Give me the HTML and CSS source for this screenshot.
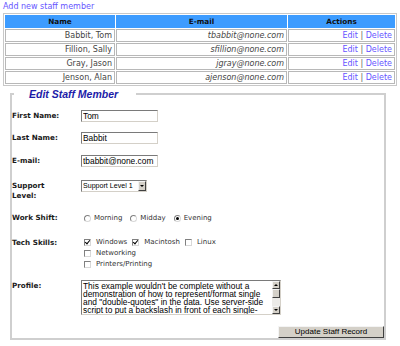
FILE: index.html
```html
<!DOCTYPE html>
<html>
<head>
<meta charset="utf-8">
<link rel="stylesheet" href="styles.css">
</head>
<body>
<a class="add-link" href="#">Add new staff member</a>
<table class="staff">
  <colgroup><col class="col-name"><col class="col-email"><col class="col-act"></colgroup>
  <thead>
    <tr><th>Name</th><th>E-mail</th><th>Actions</th></tr>
  </thead>
  <tbody>
    <tr><td>Babbit, Tom</td><td class="email">tbabbit@none.com</td><td><a href="#">Edit</a> <span class="sep">|</span> <a href="#">Delete</a></td></tr>
    <tr><td>Fillion, Sally</td><td class="email">sfillion@none.com</td><td><a href="#">Edit</a> <span class="sep">|</span> <a href="#">Delete</a></td></tr>
    <tr><td>Gray, Jason</td><td class="email">jgray@none.com</td><td><a href="#">Edit</a> <span class="sep">|</span> <a href="#">Delete</a></td></tr>
    <tr><td>Jenson, Alan</td><td class="email">ajenson@none.com</td><td><a href="#">Edit</a> <span class="sep">|</span> <a href="#">Delete</a></td></tr>
  </tbody>
</table>

<fieldset class="edit">
  <legend>Edit Staff Member</legend>
  <div class="form">
    <div class="row r1">
      <label class="lbl">First Name:</label>
      <div class="ctl"><input class="txt" type="text" value="Tom"></div>
    </div>
    <div class="row r2">
      <label class="lbl">Last Name:</label>
      <div class="ctl"><input class="txt" type="text" value="Babbit"></div>
    </div>
    <div class="row r3">
      <label class="lbl">E-mail:</label>
      <div class="ctl"><input class="txt" type="text" value="tbabbit@none.com"></div>
    </div>
    <div class="row r4">
      <label class="lbl lbl-two">Support Level:</label>
      <div class="ctl">
        <span class="sel-wrap"><select class="sel"><option>Support Level 1</option></select><span class="sel-btn"><span class="tri"></span></span></span>
      </div>
    </div>
    <div class="row r5">
      <label class="lbl lbl-10">Work Shift:</label>
      <div class="ctl opts">
        <label class="opt"><input type="radio" name="shift" class="rad"><span>Morning</span></label>
        <label class="opt"><input type="radio" name="shift" class="rad"><span>Midday</span></label>
        <label class="opt"><input type="radio" name="shift" class="rad" checked><span>Evening</span></label>
      </div>
    </div>
    <div class="row r6">
      <label class="lbl lbl-11">Tech Skills:</label>
      <div class="ctl skills">
        <div class="skill-line">
          <label class="opt cb-opt"><input type="checkbox" class="chk" checked><span>Windows</span></label>
          <label class="opt cb-opt"><input type="checkbox" class="chk" checked><span>Macintosh</span></label>
          <label class="opt cb-opt"><input type="checkbox" class="chk"><span>Linux</span></label>
        </div>
        <div class="skill-line">
          <label class="opt cb-opt"><input type="checkbox" class="chk"><span>Networking</span></label>
        </div>
        <div class="skill-line">
          <label class="opt cb-opt"><input type="checkbox" class="chk"><span>Printers/Printing</span></label>
        </div>
      </div>
    </div>
    <div class="row r7">
      <label class="lbl lbl-11">Profile:</label>
      <div class="ctl">
        <div class="ta-wrap">
          <div class="ta">This example wouldn't be complete without a demonstration of how to represent/format single and "double-quotes" in the data. Use server-side script to put a backslash in front of each single-</div>
          <div class="sbar">
            <span class="sb-btn"><span class="tri-up"></span></span>
            <span class="sb-thumb"></span>
            <span class="sb-track"></span>
            <span class="sb-btn"><span class="tri"></span></span>
          </div>
        </div>
      </div>
    </div>
    <div class="actions">
      <button class="btn" type="button">Update Staff Record</button>
    </div>
  </div>
</fieldset>
</body>
</html>
```
FILE: styles.css
```css
html, body {
  background: #fff;
}
body {
  margin: 0;
  padding: 1px 3px 0 3px;
  font-family: "DejaVu Sans", Verdana, sans-serif;
  font-size: 8px;
  color: #000;
}
a {
  color: #6655ff;
  text-decoration: none;
}
.add-link {
  display: block;
  font-size: 8px;
  line-height: 11px;
}

.staff {
  width: 394px;
  table-layout: fixed;
  border: 1px solid #c8c8c8;
  border-spacing: 1px;
  margin-top: 1px;
}
.col-name { width: 110px; }
.col-email { width: 171px; }
.col-act { width: 107px; }
.staff th {
  background: #3d9cff;
  font-weight: bold;
  font-size: 7.3px;
  line-height: 13px;
  height: 13px;
  padding: 0;
  text-align: center;
  color: #111;
}
.staff td {
  border: 1px solid #b8b8b8;
  font-size: 8px;
  line-height: 11px;
  height: 11px;
  padding: 0 2px 0 0;
  text-align: right;
  white-space: nowrap;
  color: #444;
}
.staff td.email {
  font-style: italic;
}
.staff .sep {
  color: #666;
}

.edit {
  margin: 2px 0 0 7px;
  width: 376px;
  box-sizing: border-box;
  border: 2px solid #cfcfcf;
  padding: 0;
  min-inline-size: 0;
}
.edit legend {
  margin-left: 2px;
  padding: 0 18px 0 15px;
  font-family: "Liberation Sans", Arial, sans-serif;
  font-weight: bold;
  font-style: italic;
  font-size: 10.5px;
  line-height: 12px;
  color: #1c1ca8;
}
.form {
  padding: 10px 0 0 0;
}
.row {
  display: grid;
  grid-template-columns: 69px 1fr;
  align-items: start;
}
.r2 { margin-top: 10px; }
.r3 { margin-top: 11px; }
.r4 { margin-top: 13px; }
.r5 { margin-top: 12px; }
.r6 { margin-top: 14px; }
.r7 { margin-top: 10px; }

.lbl {
  font-weight: bold;
  font-size: 7.2px;
  line-height: 12px;
  color: #1a1a1a;
}
.lbl-two {
  line-height: 10px;
  padding-top: 1px;
  width: 40px;
}
.lbl-10 { line-height: 10px; }
.lbl-11 { line-height: 11px; }

.txt {
  display: block;
  width: 77px;
  height: 12px;
  box-sizing: border-box;
  margin: 0;
  padding: 0 1px;
  border: 1px solid;
  border-color: #7a7a7a #d4d0c8 #d4d0c8 #7a7a7a;
  font-family: "Liberation Sans", Arial, sans-serif;
  font-size: 8.4px;
  line-height: 10px;
  color: #000;
  outline: none;
}

.sel-wrap {
  display: flex;
  width: 66px;
  height: 12px;
  box-sizing: border-box;
  border: 1px solid;
  border-color: #7a7a7a #d4d0c8 #d4d0c8 #7a7a7a;
  background: #fff;
}
.sel {
  appearance: none;
  -webkit-appearance: none;
  flex: 1;
  min-width: 0;
  border: 0;
  margin: 0;
  padding: 0 0 0 1px;
  height: 10px;
  font-family: "Liberation Sans", Arial, sans-serif;
  font-size: 7.1px;
  line-height: 10px;
  background: #fff;
  color: #000;
  outline: none;
}
.sel-btn {
  width: 8px;
  height: 10px;
  box-sizing: border-box;
  background: #d4d0c8;
  border: 1px solid;
  border-color: #f4f4f4 #404040 #404040 #f4f4f4;
  display: flex;
  align-items: center;
  justify-content: center;
}
.tri {
  width: 0;
  height: 0;
  border-left: 2px solid transparent;
  border-right: 2px solid transparent;
  border-top: 2px solid #000;
}
.tri-up {
  width: 0;
  height: 0;
  border-left: 2px solid transparent;
  border-right: 2px solid transparent;
  border-bottom: 2px solid #000;
}

.opts {
  display: flex;
  align-items: center;
  height: 10px;
  padding-left: 3px;
}
.opt {
  display: inline-flex;
  align-items: center;
  font-size: 7px;
  line-height: 10px;
  color: #333;
}
.opts .opt { margin-right: 8px; }
.rad {
  appearance: none;
  -webkit-appearance: none;
  width: 7px;
  height: 7px;
  margin: 0 3px 0 0;
  border-radius: 50%;
  border: 1px solid;
  border-color: #808080 #d8d8d8 #d8d8d8 #808080;
  background: #fff;
  box-sizing: border-box;
  position: relative;
}
.rad:checked::after {
  content: "";
  position: absolute;
  left: 1px;
  top: 1px;
  width: 3px;
  height: 3px;
  border-radius: 50%;
  background: #000;
}

.skills {
  padding-left: 3px;
}
.skill-line {
  display: flex;
  align-items: center;
  height: 11px;
}
.cb-opt {
  line-height: 11px;
  margin-right: 5px;
}
.chk {
  appearance: none;
  -webkit-appearance: none;
  width: 7px;
  height: 7px;
  margin: 0 5px 0 0;
  border: 1px solid;
  border-color: #808080 #d8d8d8 #d8d8d8 #808080;
  background: #fff;
  box-sizing: border-box;
  position: relative;
}
.chk:checked::after {
  content: "";
  position: absolute;
  left: 1px;
  top: -1px;
  width: 2px;
  height: 4px;
  border-right: 1px solid #000;
  border-bottom: 1px solid #000;
  transform: rotate(40deg);
}

.ta-wrap {
  display: flex;
  width: 200px;
  height: 35px;
  box-sizing: border-box;
  border: 1px solid;
  border-color: #7a7a7a #d4d0c8 #d4d0c8 #7a7a7a;
}
.ta {
  flex: 1;
  overflow: hidden;
  padding: 1px 1px 0 1px;
  font-family: "Liberation Sans", Arial, sans-serif;
  font-size: 8.4px;
  line-height: 8px;
  color: #000;
}
.sbar {
  width: 8px;
  display: flex;
  flex-direction: column;
  background: #ecebe8;
}
.sb-btn, .sb-thumb {
  box-sizing: border-box;
  width: 8px;
  background: #d4d0c8;
  border: 1px solid;
  border-color: #f4f4f4 #404040 #404040 #f4f4f4;
  display: flex;
  align-items: center;
  justify-content: center;
}
.sb-btn { height: 8px; }
.sb-thumb { height: 9px; }
.sb-track { flex: 1; }

.actions {
  display: flex;
  justify-content: flex-end;
  margin-top: 11px;
}
.btn {
  width: 106px;
  height: 12px;
  box-sizing: border-box;
  margin: 0;
  padding: 0;
  background: #d4d0c8;
  border: 1px solid;
  border-color: #f4f4f4 #404040 #404040 #f4f4f4;
  font-family: "Liberation Sans", Arial, sans-serif;
  font-size: 8px;
  line-height: 10px;
  color: #000;
}
```
